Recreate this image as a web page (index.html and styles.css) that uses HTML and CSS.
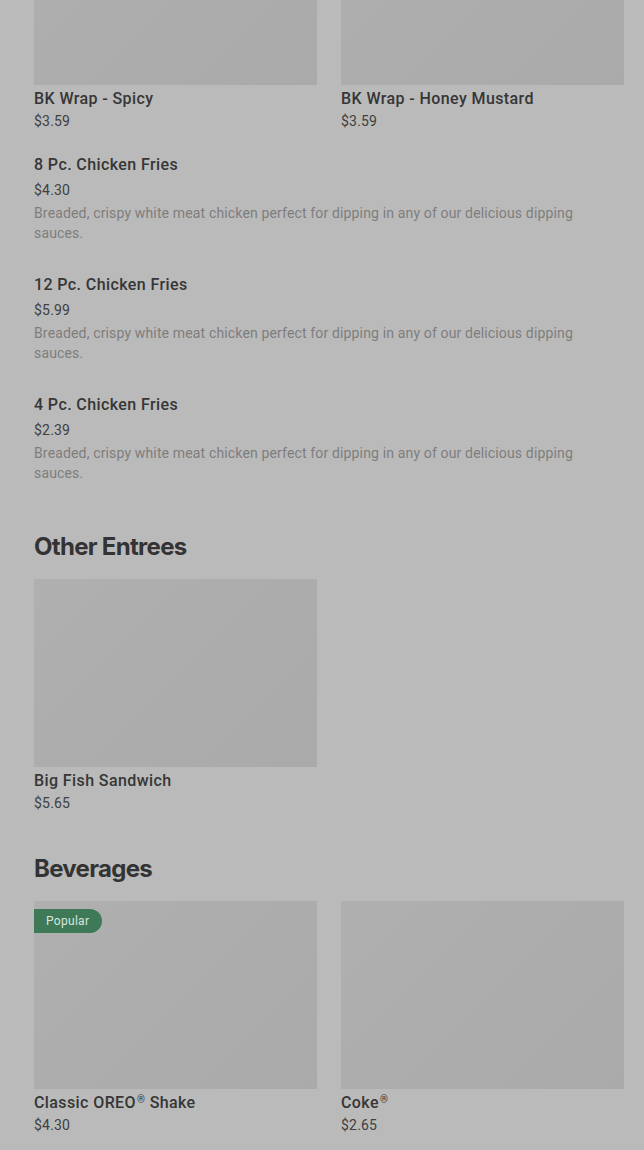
FILE: index.html
```html
<!DOCTYPE html>
<html lang="en">
<head>
<meta charset="utf-8">
<title>Menu</title>
<link rel="stylesheet" href="styles.css">
</head>
<body>
<main class="menu">
  <section class="grid">
    <article class="card">
      <div class="thumb"></div>
      <h3 class="card-title">BK Wrap - Spicy</h3>
      <p class="price">$3.59</p>
    </article>
    <article class="card">
      <div class="thumb"></div>
      <h3 class="card-title">BK Wrap - Honey Mustard</h3>
      <p class="price">$3.59</p>
    </article>
  </section>

  <section class="list">
    <article class="item">
      <h3 class="item-title">8 Pc. Chicken Fries</h3>
      <p class="price">$4.30</p>
      <p class="desc">Breaded, crispy white meat chicken perfect for dipping in any of our delicious dipping sauces.</p>
    </article>
    <article class="item">
      <h3 class="item-title">12 Pc. Chicken Fries</h3>
      <p class="price">$5.99</p>
      <p class="desc">Breaded, crispy white meat chicken perfect for dipping in any of our delicious dipping sauces.</p>
    </article>
    <article class="item">
      <h3 class="item-title">4 Pc. Chicken Fries</h3>
      <p class="price">$2.39</p>
      <p class="desc">Breaded, crispy white meat chicken perfect for dipping in any of our delicious dipping sauces.</p>
    </article>
  </section>

  <section class="category first">
    <h2 class="cat-title">Other Entrees</h2>
    <div class="grid">
      <article class="card">
        <div class="thumb"></div>
        <h3 class="card-title">Big Fish Sandwich</h3>
        <p class="price">$5.65</p>
      </article>
    </div>
  </section>

  <section class="category">
    <h2 class="cat-title">Beverages</h2>
    <div class="grid">
      <article class="card">
        <div class="thumb"><span class="badge">Popular</span></div>
        <h3 class="card-title">Classic OREO<span class="reg">®</span> Shake</h3>
        <p class="price">$4.30</p>
      </article>
      <article class="card">
        <div class="thumb"></div>
        <h3 class="card-title">Coke<span class="reg">®</span></h3>
        <p class="price">$2.65</p>
      </article>
    </div>
  </section>
</main>
</body>
</html>
```

FILE: styles.css
```css
* { box-sizing: border-box; }
html, body { margin: 0; padding: 0; background: #bababa; }
body {
  font-family: "Roboto", "Liberation Sans", Arial, sans-serif;
  color: #333333;
  overflow: hidden;
}
h2, h3, p { margin: 0; }

.menu {
  padding: 0 20px 0 34px;
  margin-top: -103px;
}

.grid {
  display: grid;
  grid-template-columns: 283px 283px;
  column-gap: 24px;
}

.card { display: flex; flex-direction: column; }

.thumb {
  position: relative;
  height: 188px;
  background: linear-gradient(135deg, #b0b0b0 0%, #adadad 40%, #aaaaaa 100%);
}

.card-title {
  margin-top: 2px;
  font-size: 16px;
  line-height: 24px;
  font-weight: 500;
  letter-spacing: 0.4px;
  color: #363636;
}

.reg {
  font-size: 10px;
  vertical-align: 5px;
  line-height: 0;
  margin-left: 1px;
}

.price {
  font-size: 14px;
  line-height: 20px;
  letter-spacing: 0.2px;
  color: #404040;
}

.badge {
  position: absolute;
  top: 8px;
  left: 0;
  height: 24px;
  padding: 0 13px 0 12px;
  background: #3e7a58;
  color: #d8e6dc;
  font-size: 12px;
  line-height: 24px;
  letter-spacing: 0.3px;
  border-radius: 0 12px 12px 0;
}

.list { margin-top: 22px; }

.item { padding-bottom: 30px; }

.item-title {
  font-size: 16px;
  line-height: 24px;
  font-weight: 500;
  letter-spacing: 0.4px;
  color: #363636;
}

.item .price { margin-top: 3px; }

.desc {
  margin-top: 3px;
  font-size: 14px;
  line-height: 20px;
  letter-spacing: 0.15px;
  color: #7e7e7e;
  max-width: 560px;
}

.category { padding-top: 40px; }
.category.first { padding-top: 18px; }

.cat-title {
  font-family: "Inter", "Liberation Sans", sans-serif;
  font-size: 24px;
  line-height: 32px;
  font-weight: 700;
  letter-spacing: -0.7px;
  color: #333333;
  margin-bottom: 16px;
}
```
